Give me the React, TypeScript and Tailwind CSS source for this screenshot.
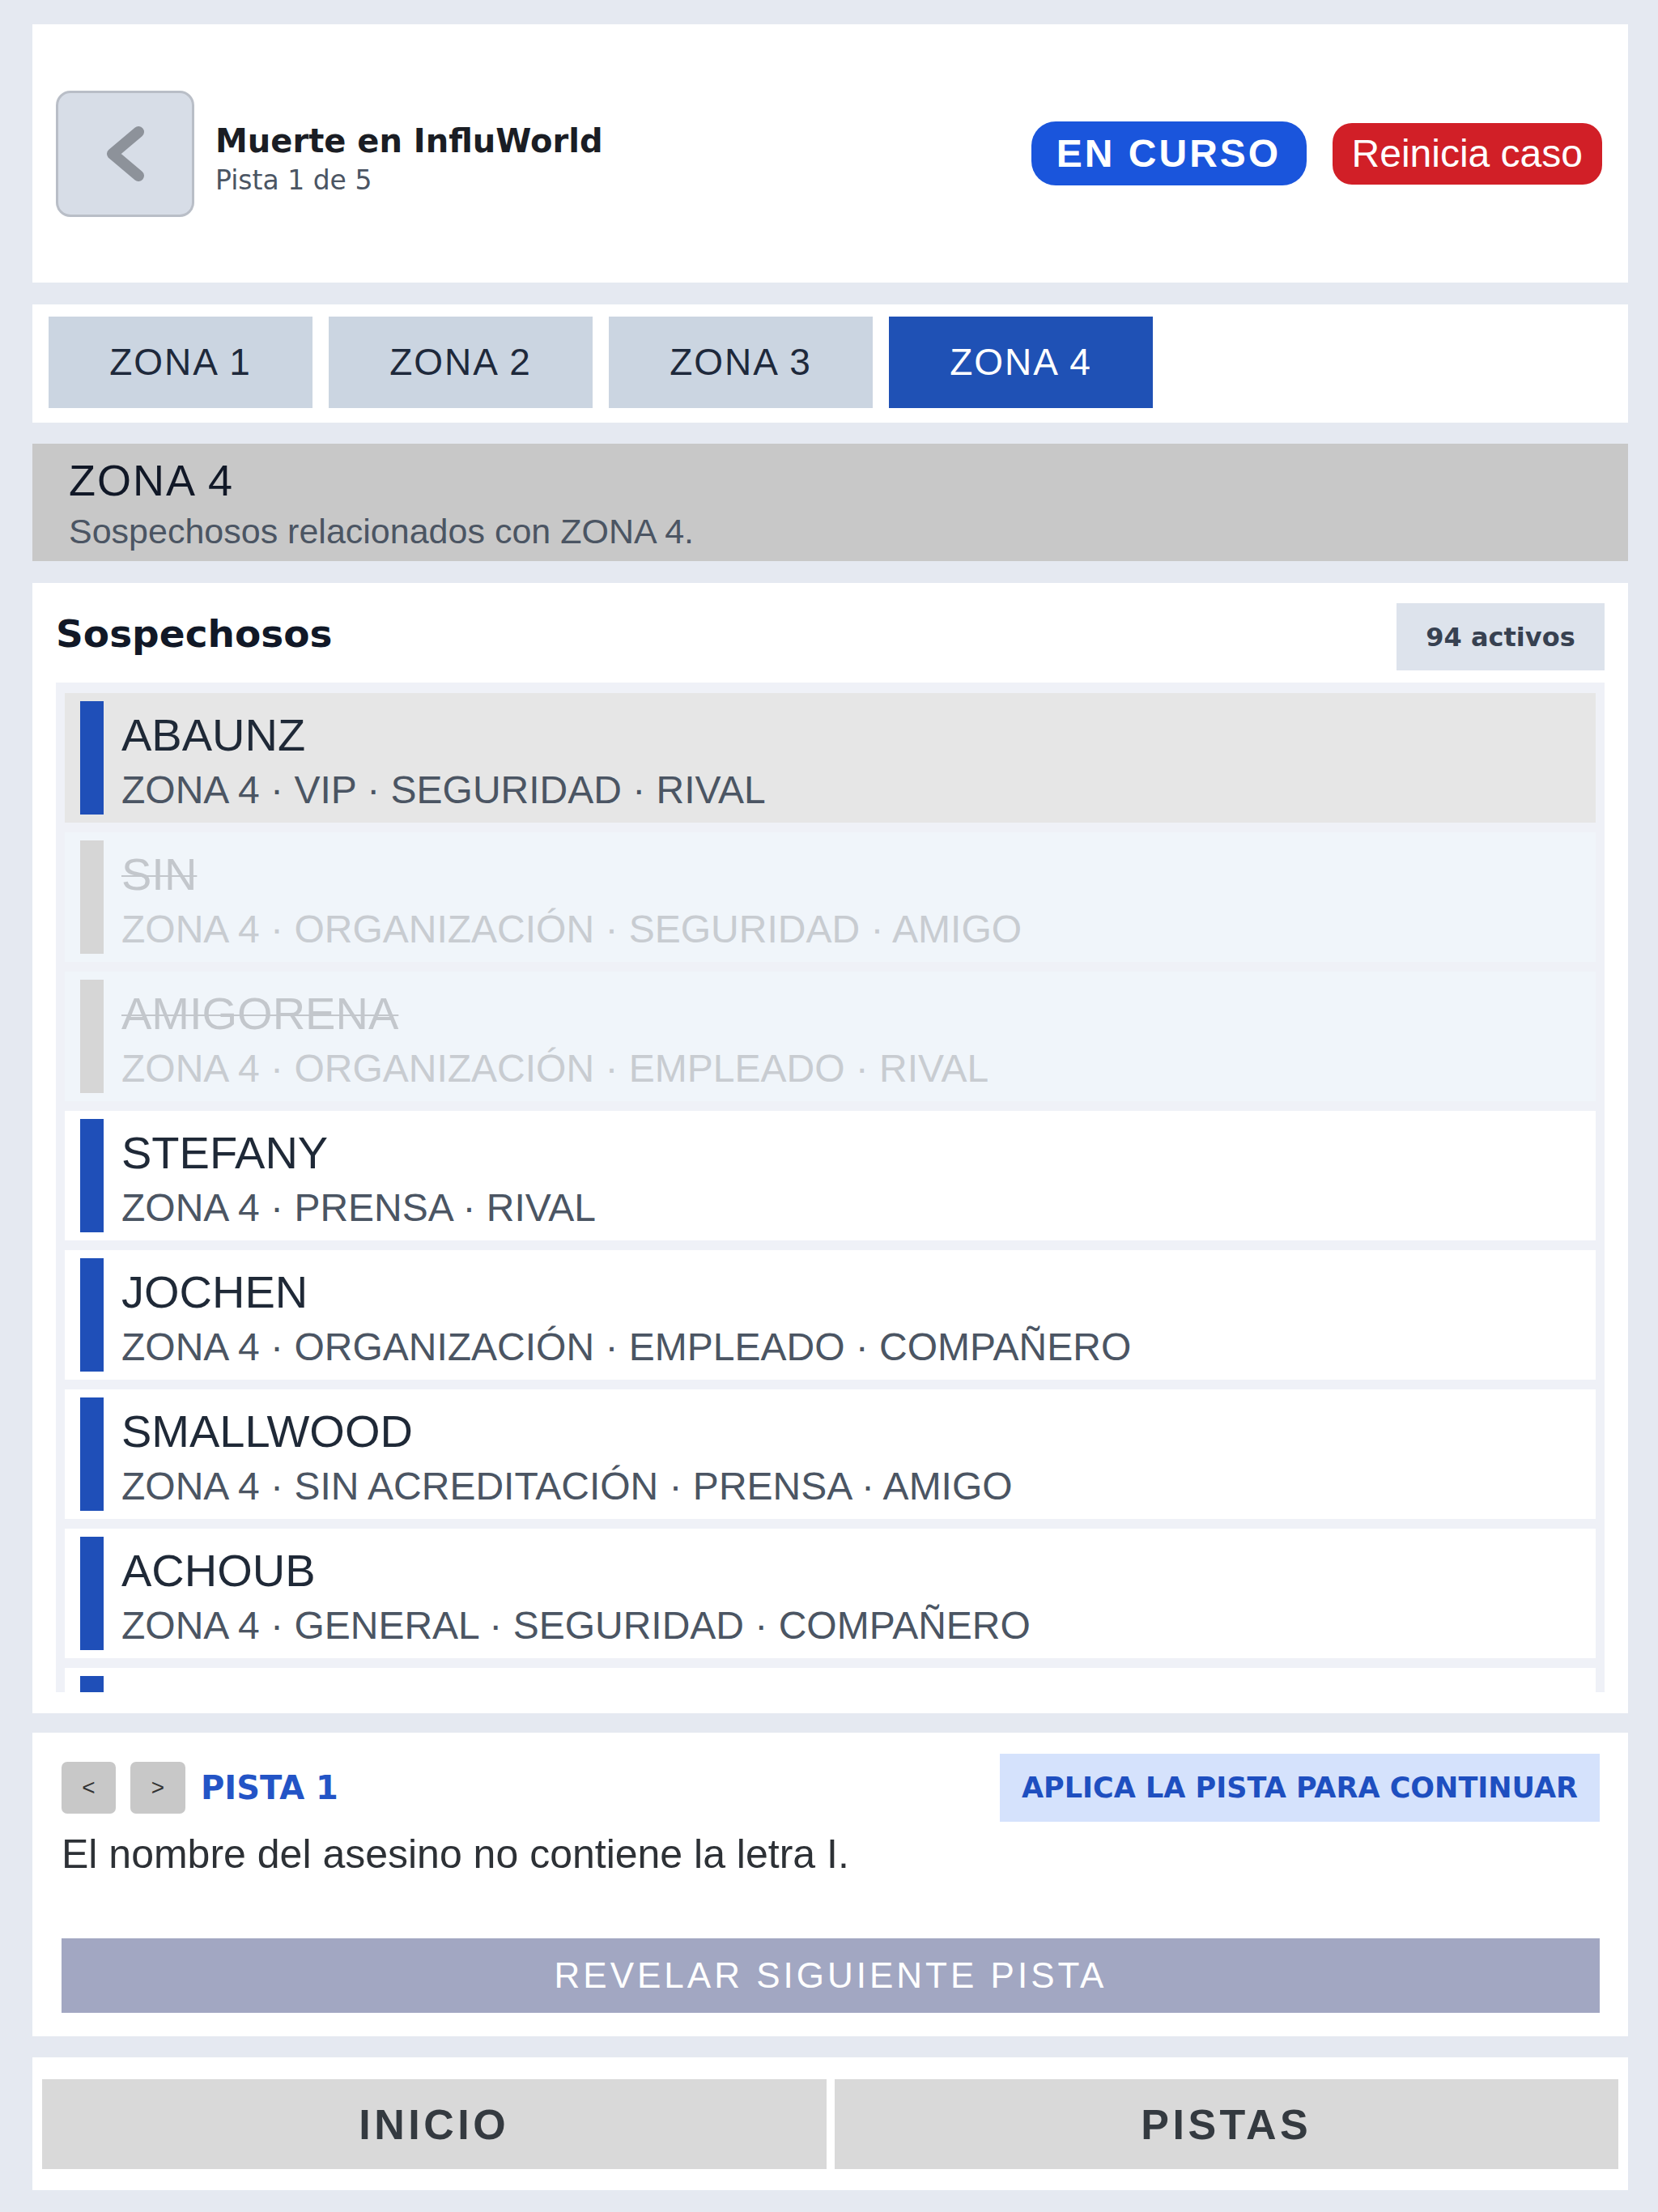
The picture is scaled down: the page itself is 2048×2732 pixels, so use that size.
import React from "react";

const DV = "font-['DejaVu_Sans',sans-serif]";
const AR = "font-['Liberation_Sans',Arial,sans-serif]";

type Row = { name: string; meta: string; state: "selected" | "active" | "out" | "blank" };

const rows: Row[] = [
  { name: "ABAUNZ", meta: "ZONA 4 · VIP · SEGURIDAD · RIVAL", state: "selected" },
  { name: "SIN", meta: "ZONA 4 · ORGANIZACIÓN · SEGURIDAD · AMIGO", state: "out" },
  { name: "AMIGORENA", meta: "ZONA 4 · ORGANIZACIÓN · EMPLEADO · RIVAL", state: "out" },
  { name: "STEFANY", meta: "ZONA 4 · PRENSA · RIVAL", state: "active" },
  { name: "JOCHEN", meta: "ZONA 4 · ORGANIZACIÓN · EMPLEADO · COMPAÑERO", state: "active" },
  { name: "SMALLWOOD", meta: "ZONA 4 · SIN ACREDITACIÓN · PRENSA · AMIGO", state: "active" },
  { name: "ACHOUB", meta: "ZONA 4 · GENERAL · SEGURIDAD · COMPAÑERO", state: "active" },
  { name: "", meta: "", state: "blank" },
];

function SuspectRow({ r }: { r: Row }) {
  const out = r.state === "out";
  const bg =
    r.state === "selected" ? "bg-[#e6e6e6]" : out ? "bg-[#f0f5fa]" : "bg-white";
  return (
    <div className={`flex h-[160px] shrink-0 py-[10px] pl-[19px] ${bg}`}>
      <div className={`w-[29px] shrink-0 self-stretch ${out ? "bg-[#d6d6d6]" : "bg-[#1f4fb8]"}`} />
      <div className={`flex flex-col pl-[22px] pt-[10px] ${AR}`}>
        <div
          className={`text-[56px] leading-[63px] ${
            out ? "text-[#c3c7cc] line-through decoration-[2px]" : "text-[#1f2937]"
          }`}
        >
          {r.name}
        </div>
        <div className={`mt-[9px] text-[48px] leading-[55px] ${out ? "text-[#c8ccd1]" : "text-[#4b5563]"}`}>
          {r.meta}
        </div>
      </div>
    </div>
  );
}

export default function App() {
  const tabs = ["ZONA 1", "ZONA 2", "ZONA 3", "ZONA 4"];
  return (
    <div className={`min-h-[2732px] w-full bg-[#e5e9f1] pl-[40px] pr-[37px] pt-[30px] pb-[27px] ${AR}`}>
      {/* Header */}
      <div className="flex h-[319px] items-center justify-between bg-white pl-[29px] pr-[32px]">
        <div className="flex items-center">
          <div className="flex h-[156px] w-[171px] items-center justify-center rounded-[18px] border-[3px] border-[#b9bec7] bg-[#d7dde7]">
            <svg width="60" height="72" viewBox="0 0 60 72" fill="none">
              <polyline
                points="46,9 14,36 46,63"
                stroke="#8d929a"
                strokeWidth="14"
                strokeLinecap="round"
                strokeLinejoin="round"
              />
            </svg>
          </div>
          <div className="ml-[26px] flex flex-col pt-[14px]">
            <div className={`${DV} text-[40px] font-bold leading-[46px] text-[#1a1d24]`}>Muerte en InfluWorld</div>
            <div className={`${DV} mt-[7px] text-[33px] leading-[38px] text-[#4b5563]`}>Pista 1 de 5</div>
          </div>
        </div>
        <div className="flex items-center gap-[32px]">
          <div className="flex h-[79px] w-[340px] items-center justify-center rounded-[30px] bg-[#1a55dc] text-[48px] font-bold tracking-[3px] text-white">
            EN CURSO
          </div>
          <div className="flex h-[76px] items-center rounded-[24px] bg-[#d11f27] px-[24px] text-[48px] text-white">
            Reinicia caso
          </div>
        </div>
      </div>

      {/* Tabs */}
      <div className="mt-[27px] flex h-[146px] gap-[20px] bg-white px-[20px] pt-[15px]">
        {tabs.map((t, i) => (
          <div
            key={t}
            className={`flex h-[113px] w-[326px] items-center justify-center text-[46px] tracking-[2px] ${
              i === 3 ? "bg-[#1f51b5] text-white" : "bg-[#cbd5e1] text-[#1e293b]"
            }`}
          >
            {t}
          </div>
        ))}
      </div>

      {/* Zone banner */}
      <div className="mt-[26px] h-[145px] bg-[#c8c8c8] pl-[45px] pt-[16px]">
        <div className="text-[54px] leading-[58px] tracking-[2px] text-[#111827]">ZONA 4</div>
        <div className="mt-[10px] text-[43px] leading-[48px] text-[#4b5563]">Sospechosos relacionados con ZONA 4.</div>
      </div>

      {/* Suspects */}
      <div className="mt-[27px] bg-white px-[29px] pt-[25px] pb-[26px]">
        <div className="flex h-[83px] items-center justify-between">
          <div className={`${DV} -mt-[6px] text-[47px] font-bold text-[#111827]`}>Sospechosos</div>
          <div className={`${DV} flex h-[83px] w-[257px] items-center justify-center bg-[#dde3ec] text-[32px] font-bold text-[#374151]`}>
            94 activos
          </div>
        </div>
        <div className="mt-[15px] flex h-[1247px] flex-col gap-[12px] overflow-hidden bg-[#eff1f7] px-[11px] pt-[13px]">
          {rows.map((r, i) => (
            <SuspectRow key={i} r={r} />
          ))}
        </div>
      </div>

      {/* Clue */}
      <div className="mt-[24px] bg-white pl-[36px] pr-[35px] pt-[26px] pb-[29px]">
        <div className="flex h-[84px] items-center justify-between">
          <div className="flex items-center">
            <div className="flex h-[64px] w-[67px] items-center justify-center rounded-[7px] bg-[#c8c8c8] text-[28px] text-[#333]">
              &lt;
            </div>
            <div className="ml-[18px] flex h-[64px] w-[68px] items-center justify-center rounded-[7px] bg-[#c8c8c8] text-[28px] text-[#333]">
              &gt;
            </div>
            <div className={`${DV} ml-[19px] text-[40px] font-bold text-[#2354c6]`}>PISTA 1</div>
          </div>
          <div className={`${DV} flex h-[84px] w-[741px] items-center justify-center bg-[#d5e2fc] text-[35px] font-bold text-[#1e4fc0]`}>
            APLICA LA PISTA PARA CONTINUAR
          </div>
        </div>
        <div className="mt-[12px] text-[50px] leading-[56px] text-[#2d3136]">
          El nombre del asesino no contiene la letra I.
        </div>
        <div className="mt-[76px] flex h-[92px] items-center justify-center bg-[#a2a7c2] text-[44px] tracking-[4px] text-white">
          REVELAR SIGUIENTE PISTA
        </div>
      </div>

      {/* Nav */}
      <div className="mt-[26px] flex h-[164px] gap-[10px] bg-white px-[12px] pt-[27px]">
        <div className="flex h-[111px] flex-1 items-center justify-center bg-[#d9d9d9] text-[52px] font-bold tracking-[4.5px] text-[#343a40]">
          INICIO
        </div>
        <div className="flex h-[111px] flex-1 items-center justify-center bg-[#d9d9d9] text-[52px] font-bold tracking-[4.5px] text-[#343a40]">
          PISTAS
        </div>
      </div>
    </div>
  );
}
